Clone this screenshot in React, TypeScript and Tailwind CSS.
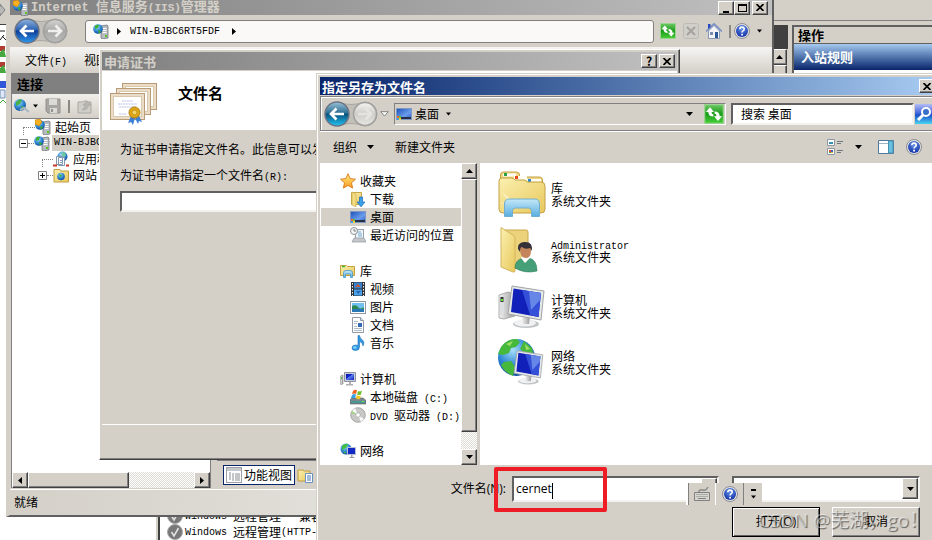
import React from "react";

type Kids = { children?: React.ReactNode; className?: string };

const raised =
  "border border-t-white border-l-white border-r-[#404040] border-b-[#404040] bg-[#d4d0c8] shadow-[inset_-1px_-1px_0_#808080]";
const sunken =
  "border-2 border-t-[#606060] border-l-[#606060] border-r-[#f4f2ee] border-b-[#f4f2ee]";
const dither =
  "bg-[#f2f0ec] bg-[conic-gradient(#dedbd4_25%,#fff_0_50%,#dedbd4_0_75%,#fff_0)] bg-[length:2px_2px]";

// latin glyphs are half the width of the chinese ones
const En = ({ children, className = "text-[10px]" }: Kids) => (
  <span className={`font-['Liberation_Mono',monospace] whitespace-pre ${className}`}>{children}</span>
);

const Defs = () => (
  <svg className="absolute h-0 w-0" aria-hidden="true">
    <defs>
      <linearGradient id="navBlue" x1="0" y1="0" x2="0" y2="1">
        <stop offset="0" stopColor="#8fb4dc" />
        <stop offset=".45" stopColor="#2d63b4" />
        <stop offset=".5" stopColor="#0d3c96" />
        <stop offset="1" stopColor="#2f9af0" />
      </linearGradient>
      <linearGradient id="navTeal" x1="0" y1="0" x2="0" y2="1">
        <stop offset="0" stopColor="#9cc0d6" />
        <stop offset=".45" stopColor="#2f7196" />
        <stop offset=".5" stopColor="#08517c" />
        <stop offset="1" stopColor="#22c4f4" />
      </linearGradient>
      <linearGradient id="searchBlue" x1="0" y1="0" x2="0" y2="1">
        <stop offset="0" stopColor="#b4bcf4" />
        <stop offset=".45" stopColor="#4468dc" />
        <stop offset=".55" stopColor="#1c50c8" />
        <stop offset="1" stopColor="#48d4f4" />
      </linearGradient>
      <linearGradient id="navGray" x1="0" y1="0" x2="0" y2="1">
        <stop offset="0" stopColor="#d4d4d2" />
        <stop offset=".5" stopColor="#a8a8a6" />
        <stop offset="1" stopColor="#bcbcba" />
      </linearGradient>
      <linearGradient id="navLight" x1="0" y1="0" x2="0" y2="1">
        <stop offset="0" stopColor="#f4f4f2" />
        <stop offset=".5" stopColor="#cfcdc8" />
        <stop offset="1" stopColor="#e8e6e2" />
      </linearGradient>
      <linearGradient id="folder" x1="0" y1="0" x2="1" y2="1">
        <stop offset="0" stopColor="#fbf0b0" />
        <stop offset="1" stopColor="#e8c85c" />
      </linearGradient>
      <linearGradient id="screen" x1="0" y1="0" x2="1" y2="1">
        <stop offset="0" stopColor="#0a16a0" />
        <stop offset=".4" stopColor="#1226d0" />
        <stop offset=".45" stopColor="#5a80f0" />
        <stop offset="1" stopColor="#1020b8" />
      </linearGradient>
      <linearGradient id="desk" x1="0" y1="0" x2="1" y2="1">
        <stop offset="0" stopColor="#1a50b8" />
        <stop offset=".6" stopColor="#6a9cec" />
        <stop offset="1" stopColor="#2858c0" />
      </linearGradient>
      <linearGradient id="glass" x1="0" y1="0" x2="0" y2="1">
        <stop offset="0" stopColor="#c4e8f8" />
        <stop offset="1" stopColor="#58aee0" />
      </linearGradient>
      <linearGradient id="green" x1="0" y1="0" x2="0" y2="1">
        <stop offset="0" stopColor="#6cc864" />
        <stop offset=".5" stopColor="#1c9c1c" />
        <stop offset="1" stopColor="#48d038" />
      </linearGradient>
      <linearGradient id="metal" x1="0" y1="0" x2="1" y2="0">
        <stop offset="0" stopColor="#f2f2f2" />
        <stop offset="1" stopColor="#9a9a9a" />
      </linearGradient>
      <radialGradient id="globe" cx=".4" cy=".3" r=".8">
        <stop offset="0" stopColor="#a8e0fc" />
        <stop offset=".5" stopColor="#3088d4" />
        <stop offset="1" stopColor="#0a3c94" />
      </radialGradient>
      <radialGradient id="help" cx=".5" cy=".3" r=".7">
        <stop offset="0" stopColor="#6a94ec" />
        <stop offset="1" stopColor="#1030a4" />
      </radialGradient>
      <linearGradient id="star" x1="0" y1="0" x2="0" y2="1">
        <stop offset="0" stopColor="#fff080" />
        <stop offset="1" stopColor="#f89820" />
      </linearGradient>
    </defs>
  </svg>
);

const Svg = ({ children, className = "size-4", box = "0 0 16 16" }: Kids & { box?: string }) => (
  <svg viewBox={box} className={`shrink-0 ${className}`} aria-hidden="true">{children}</svg>
);

const Down = ({ className = "w-[7px]" }: Kids) => (
  <Svg box="0 0 7 4" className={`h-1 ${className}`}><path d="M0 0h7L3.500 4z" /></Svg>
);
const Up = () => <Svg box="0 0 7 4" className="h-1 w-[7px]"><path d="M0 4h7L3.500 0z" /></Svg>;
const RightTri = () => <Svg box="0 0 4 7" className="h-[7px] w-1"><path d="M0 0v7l4-3.500z" /></Svg>;
const LeftTri = () => <Svg box="0 0 4 7" className="h-[7px] w-1"><path d="M4 0v7L0 3.500z" /></Svg>;
const Cross = () => (
  <Svg box="0 0 8 7" className="h-[7px] w-2"><path d="M.5 0l7 7M7.500 0l-7 7" stroke="#000" strokeWidth="1.700" /></Svg>
);

const NavPair = ({ teal = false }: { teal?: boolean }) => (
  <Svg box="0 0 56 28" className="h-7 w-14">
    <path d="M14 2Q28 7 42 2a12 12 0 010 24Q28 21 14 26z" fill="#c2bfb9" stroke="#aaa7a1" />
    <circle cx="14" cy="14" r="12" fill={teal ? "url(#navTeal)" : "url(#navBlue)"} stroke="#6c7484" strokeWidth="1.500" />
    <circle cx="42" cy="14" r="11.500" fill={teal ? "url(#navLight)" : "url(#navGray)"} stroke="#a0a09e" strokeWidth="1.500" />
    <path d="M21 14H9M13.500 8.500L8 14l5.500 5.500" fill="none" stroke="#fff" strokeWidth="2.700" />
    <path d="M35 14h12M42.500 8.500L48 14l-5.500 5.500" fill="none" stroke={teal ? "#e6e4e0" : "#f0efee"} strokeWidth="2.700" />
  </Svg>
);

const HelpIcon = () => (
  <Svg>
    <circle cx="8" cy="8" r="7.500" fill="#e4e4e4" stroke="#8c8c94" />
    <circle cx="8" cy="8" r="6" fill="url(#help)" />
    <path d="M5.800 6.300q0-2.200 2.200-2.200t2.200 1.900q0 1.200-1.200 1.900-.9.500-.9 1.600" fill="none" stroke="#fff" strokeWidth="1.600" />
    <rect x="7.200" y="10.800" width="1.800" height="1.700" fill="#fff" />
  </Svg>
);

const Refresh = ({ className = "size-4" }: Kids) => (
  <Svg className={className}>
    <rect x=".5" y=".5" width="15" height="15" fill="url(#green)" stroke="#9ad490" />
    <path d="M4.800 2.500L1.500 6.300h2q0 3.700 4 3.700V8.200q-1.500 0-1.500-1.900h2z" fill="#fff" />
    <path d="M11.200 13.500l3.300-3.800h-2q0-3.700-4-3.700v1.800q1.500 0 1.500 1.900H8z" fill="#fff" />
  </Svg>
);

const ServerIcon = ({ badge = false }: { badge?: boolean }) => (
  <Svg>
    <path d="M8 3l6-1 1 1v12l-6 1-1-1z" fill="#b8bcc0" stroke="#62686e" strokeWidth=".7" />
    <path d="M9.500 5.500h4M9.500 7.500h4M9.500 9.500h4" stroke="#fff" />
    <rect x="12" y="12" width="2" height="2" fill="#58c820" />
    <circle cx="5" cy="6" r="4.800" fill="url(#globe)" />
    <path d="M2 3q2-2 4-1L5 5 2 6zM5 7l3 1-2 3z" fill="#3cb030" />
    {badge && <path d="M0 1l5-1 2 3-3 4-4-2z" fill="#f6b020" stroke="#c87808" strokeWidth=".6" />}
  </Svg>
);

const DesktopIcon = () => (
  <Svg>
    <rect x=".5" y="2.500" width="15" height="11" fill="url(#desk)" stroke="#8298c4" />
    <rect x="1" y="11" width="14" height="2" fill="#283048" />
    <path d="M1 10h2v2H1z" fill="#f06830" /><path d="M3 10h2v2H3z" fill="#60c040" />
    <path d="M1 12h2v2H1z" fill="#40a0f0" /><path d="M3 12h2v2H3z" fill="#f8d030" />
  </Svg>
);

const StarIcon = () => (
  <Svg><path d="M8 .7l2.200 4.900 5.300.6-4 3.600 1.100 5.300L8 12.400l-4.600 2.700 1.100-5.300-4-3.600 5.300-.6z" fill="url(#star)" stroke="#d8781c" strokeWidth=".9" /></Svg>
);
const DownloadIcon = () => (
  <Svg>
    <path d="M1.500 1.500h10v12h-10z" fill="url(#folder)" stroke="#c8a848" />
    <path d="M2 1l4 2v13l-4-2z" fill="#f4dc84" stroke="#c8a848" strokeWidth=".6" />
    <path d="M9.500 6h3v5h2.500l-4 4.800L7 11h2.500z" fill="#38a0e8" stroke="#1868b8" strokeWidth=".7" />
  </Svg>
);
const RecentIcon = () => (
  <Svg>
    <rect x="5.500" y="2.500" width="8" height="9" fill="#f0f4f8" stroke="#98a0a8" />
    <path d="M7 5h4M8 7h4M8 9h4" stroke="#70a8d0" />
    <path d="M4 11h10l2 4H2z" fill="#c4c8cc" stroke="#94989c" strokeWidth=".7" />
    <circle cx="4" cy="4" r="3.500" fill="#f4f4f4" stroke="#909498" />
    <path d="M4 2v2h2" fill="none" stroke="#606468" strokeWidth=".8" />
  </Svg>
);
const LibraryIcon = () => (
  <Svg>
    <path d="M.5 2.500h6l1 1h7v9h-14z" fill="url(#folder)" stroke="#c8a040" />
    <path d="M2 3.500h3" stroke="#38b838" strokeWidth="1.500" />
    <path d="M3.500 14.500V10q0-2.500 2.500-2.500h4q2.500 0 2.500 2.500v4.500h-2V11h-5v3.500z" fill="url(#glass)" stroke="#4898c8" strokeWidth=".8" />
  </Svg>
);
const VideoIcon = () => (
  <Svg>
    <rect x="1" y="1" width="14" height="14" fill="#303438" />
    <rect x="4" y="1.500" width="8" height="6" fill="#3880d0" /><rect x="4" y="8.500" width="8" height="6" fill="#48a0e8" />
    <path d="M5 6l3-3 3 3z" fill="#c05838" /><path d="M6 10h5l-3 3z" fill="#2c64b4" />
    <path d="M2.500 2v13M13.500 2v13" stroke="#f4f4f4" strokeDasharray="1.500 1.500" />
  </Svg>
);
const PictureIcon = () => (
  <Svg>
    <rect x=".5" y="2.500" width="15" height="12" fill="#fff" stroke="#8c98a4" />
    <rect x="2" y="4" width="12" height="9" fill="#70c0f0" />
    <path d="M2 7q4-2 6 1t6 0v2H2z" fill="#2c8850" /><path d="M2 10h12v3H2z" fill="#2878b8" />
  </Svg>
);
const DocIcon = () => (
  <Svg>
    <path d="M2.500.5h8l3 3v12h-11z" fill="#fff" stroke="#909aa4" />
    <path d="M10.500.5v3h3" fill="#dce4ec" stroke="#909aa4" />
    <path d="M4 4.500h4M4 6.500h3M4 9.500h3M4 11.500h8M4 13.500h8" stroke="#9aacbc" strokeWidth=".8" />
    <rect x="8" y="6" width="4" height="4" fill="#3468b8" />
  </Svg>
);
const MusicIcon = () => (
  <Svg>
    <path d="M8 .5h1.500q0 2.500 3 4.500 2.500 2.500.5 6Q13 7.500 9.500 6.500V12q0 3.500-4 3.500Q2 15.500 2 13q0-2.800 3.500-3 1.500 0 2.500.5z" fill="#3098e0" stroke="#1c70b8" strokeWidth=".6" />
    <ellipse cx="4.800" cy="12.500" rx="1.800" ry="1.300" fill="#80d0f8" />
  </Svg>
);
const ComputerIcon = () => (
  <Svg>
    <path d="M.5 5l2.500-1v9l-2.500.5z" fill="url(#metal)" stroke="#888" strokeWidth=".6" /><path d="M1 6h1v2H1z" fill="#40d030" />
    <path d="M4.500 1.500h11v9h-11z" fill="#c8ccd8" stroke="#8c90a0" />
    <rect x="6" y="3" width="8" height="6" fill="url(#screen)" />
    <path d="M9 11h2v2h2v1.500H6V13h3z" fill="#b0b0b4" />
  </Svg>
);
const DiskIcon = () => (
  <Svg>
    <path d="M2 9h11l3 2.500v3.500H0v-4z" fill="#7c868c" stroke="#50585c" strokeWidth=".6" />
    <path d="M1 12h14v2H1z" fill="#489894" /><path d="M12 12h2v1h-2z" fill="#60f040" />
    <path d="M3 2q2-2 4-.8L6 5Q4 4 2 5z" fill="#f06020" /><path d="M8 2q2 1 4-.5L11 5.500q-2 1-4 0z" fill="#70c030" />
    <path d="M2 6q2-1.500 4-.5L5 9H1z" fill="#38a0e8" /><path d="M6.700 6q2 1.500 4 .5L10 10q-2 .5-4-.5z" fill="#f8c820" />
  </Svg>
);
const DvdIcon = () => (
  <Svg>
    <circle cx="8" cy="8" r="7.300" fill="#c8c8c6" stroke="#989898" strokeWidth=".8" />
    <path d="M8 8L2 4l3-3zM8 8l6 4-3 3z" fill="#f8f8f8" /><path d="M8 8L1 6l1-2z" fill="#80e040" opacity=".6" />
    <circle cx="8" cy="8" r="2.300" fill="#fff" stroke="#a8a8a8" strokeWidth=".8" />
  </Svg>
);
const NetworkIcon = () => (
  <Svg>
    <circle cx="6" cy="6" r="5.500" fill="url(#globe)" />
    <path d="M2 3q3-3 6-2L6 5 2 7zM3 8l3 1-1 2z" fill="#40c040" />
    <path d="M7.500 4.500h8v7h-8z" fill="#1428c4" stroke="#b8c0d8" /><path d="M11 12h1.500v2h2V15h-5v-1H11z" fill="#98a0a8" />
  </Svg>
);

const BigLibrary = () => (
  <Svg box="0 0 48 48" className="size-12">
    <path d="M2.500 9V5q0-3 3-3h13q3 0 3 3v2h20q3 0 3 3v30h-42z" fill="#eed684" stroke="#c4a044" />
    <path d="M5 3.500h13v3H5zM16 6h13v4H16zM29 9h14v4H29z" fill="#fffef4" />
    <rect x="6" y="3" width="3" height="3" fill="#28a048" /><rect x="17" y="6" width="3" height="3" fill="#e84818" /><rect x="30" y="9" width="3" height="3" fill="#2888d8" />
    <path d="M1 11q0-3 3-3h9q3 0 4 2h9q2 0 3 2h14q4 0 4 4v23q0 4-4 4H5q-4 0-4-4z" fill="url(#folder)" stroke="#c4a044" />
    <path d="M11 28L4 22l6 9-8 3 9-1 3 8-1-9 7-5-8 4z" fill="#fffbe0" opacity=".7" />
    <path d="M6.500 46.500V34q0-5 5-5h25q5 0 5 5v12.500h-8V41q0-3-3-3h-13q-3 0-3 3v5.500z" fill="url(#glass)" stroke="#70aed0" />
  </Svg>
);
const BigUser = () => (
  <Svg box="0 0 48 48" className="size-12">
    <path d="M6 4h22q2 0 2 2v34l-14 3z" fill="#ecd27a" stroke="#c9a84e" />
    <path d="M3 1.500L15 9q2 1 2 3v32q0 3-2 2L3 41z" fill="url(#folder)" stroke="#d4b65c" />
    <path d="M17 42q0-8 8-10h6q8 2 8 13-12 3-22-3z" fill="#46a077" stroke="#2c7858" strokeWidth=".6" />
    <path d="M23 32l4 5 5-5-1-3h-6z" fill="#fff" />
    <path d="M22 23q0-5 6-5 5 0 5 6 0 8-5 8-6 0-6-9z" fill="#c4845c" />
    <path d="M20 23q-1-6 6-7 9-1 8 9l-2-3q-5 2-8-1-2 0-2 5z" fill="#343238" />
  </Svg>
);
const Monitor = () => (
  <>
    <ellipse cx="28" cy="39" rx="13" ry="4" fill="#c0c4c6" /><ellipse cx="27" cy="38" rx="11" ry="3.500" fill="#f0f1f2" />
    <path d="M24 31l8 1-1 7h-7z" fill="url(#metal)" />
    <path d="M14 1l32 5-3 29-33-6z" fill="#e6e8e8" stroke="#a0a4a4" />
    <path d="M15.500 3.500L43 8l-2.500 24L13 27z" fill="#1020b8" />
    <path d="M24 5l19 3-2.500 24-8.500-2z" fill="#3450d8" /><path d="M31 6l12 2-1 7-9 10z" fill="#7c9cf0" opacity=".7" />
  </>
);
const BigComputer = () => (
  <Svg box="0 0 48 48" className="size-12">
    <g transform="translate(0 3)">
      <path d="M1 10l9-3 7 2v22L6 34l-5-1z" fill="url(#metal)" stroke="#a0a0a0" strokeWidth=".8" />
      <path d="M2 12h4v18H2z" fill="#dcdedf" /><path d="M2.500 12h3v5h-3z" fill="#303438" /><path d="M3 14h2v2H3z" fill="#70e830" />
      <Monitor />
    </g>
  </Svg>
);
const BigNetwork = () => (
  <Svg box="0 0 48 48" className="size-12">
    <circle cx="18.500" cy="19.500" r="18.500" fill="url(#globe)" />
    <path d="M3 9q7-9 16-8l3 3-4 5-5 1-2 5-6 2-5-1zM26 3l8 7 2 9-6 2-3-6-5-4zM6 24l7-1 4 6-2 9q-9-4-12-11z" fill="#46b83c" />
    <path d="M8 6l7-3-3 5zM27 6l5 5-4 1z" fill="#b8e870" opacity=".8" />
    <g transform="translate(8 12) scale(.8)"><Monitor /></g>
  </Svg>
);

const CertIcon = () => (
  <Svg box="0 0 48 42" className="h-[42px] w-12">
    {[[12, 0], [6, 5], [0, 10]].map(([x, y]) => (
      <g key={x} transform={`translate(${x} ${y})`}>
        <rect x=".5" y=".5" width="34" height="26" fill="#eadcc6" stroke="#b89c78" />
        <rect x="3.500" y="3.500" width="28" height="20" fill="#fff" stroke="#d8c8ac" />
      </g>
    ))}
    <path d="M12 18h11M8 21h19M9 24h17M9 31h8" stroke="#a8b4e0" strokeDasharray="2 .6" strokeWidth=".8" />
    <path d="M21 33l-3 7 3-1 2 3 2-7 3 6 1-3 3 1-4-8z" fill="#3c80d8" />
    <circle cx="24.500" cy="29.500" r="5.500" fill="#e0a818" stroke="#b07c08" /><circle cx="24.500" cy="29.500" r="2.500" fill="#f4d468" stroke="#b88810" strokeWidth=".8" />
  </Svg>
);

const HomeIcon = () => (
  <Svg>
    <path d="M2.500 8v7.500h11V8L8 2.500z" fill="#f4f4f8" stroke="#8898b8" />
    <path d="M0 8.500L8 .8l8 7.700" fill="none" stroke="#7890c4" strokeWidth="1.600" /><path d="M2 1h2.500v3L2 6z" fill="#2848c0" />
    <rect x="9" y="9" width="3" height="6" fill="#2c5898" /><rect x="4" y="9" width="3" height="3" fill="#788cac" />
  </Svg>
);
const AppPoolIcon = () => (
  <Svg>
    <circle cx="9.500" cy="5.500" r="5" fill="url(#globe)" /><path d="M8 2l4-1 1 4-3 1z" fill="#70c8a0" />
    <path d="M3.500 5.500h6v8h-6zM5.500 6.500h6v8h-6z" fill="#fff" stroke="#8098b0" />
    <path d="M7 9.500h3M7 11.500h3" stroke="#88a0c0" /><path d="M0 14.500h4M13 14.500h3" stroke="#c83828" strokeWidth="2" />
  </Svg>
);
const SiteIcon = () => (
  <Svg>
    <path d="M1 2.500h6l1 1.500h7.500v11H1z" fill="url(#folder)" stroke="#c49c40" />
    <circle cx="8" cy="9.500" r="3.800" fill="url(#globe)" /><path d="M6 7l3 1-2 3z" fill="#38b040" />
  </Svg>
);

const TreeBox = ({ open = false }: { open?: boolean }) => (
  <Svg box="0 0 9 9" className="size-[9px]">
    <path d="M.5.5h8v8h-8z" fill="#fff" stroke="#808080" />
    <path d={open ? "M2 4.500h5" : "M2 4.500h5M4.500 2v5"} stroke="#000" />
  </Svg>
);
const Dots = ({ className = "" }: Kids) => <span className={`border-t border-dotted border-[#808080] ${className}`} />;

const CaptionButton = ({ children, label }: Kids & { label: string }) => (
  <button aria-label={label} className={`flex h-[14px] w-4 shrink-0 items-center justify-center text-[12px] leading-none font-bold ${raised}`}>{children}</button>
);

const BackgroundWindows = () => (
  <>
    {/* sliver of the window at the far left */}
    <div className="absolute top-0 bottom-0 left-0 w-[6px] overflow-hidden bg-white">
      <div className="h-[21px] bg-[#d4d0c8] pt-[3px]">
        <Svg box="0 0 6 14" className="h-[14px] w-[6px]"><path d="M0 4V1l5 6-5 6v-3" fill="#b8b8b8" stroke="#808080" /></Svg>
      </div>
      <div className="h-1 border-b border-[#404040] bg-[#d4d0c8]" />
      <Svg box="0 0 6 80" className="h-20 w-[6px]">
        <path d="M0 6h5M4 10l-4 5M2 11l4 4" stroke="#222" fill="none" />
        <path d="M0 21h5v5H0zM0 37h5v5H0z" fill="#b03c34" /><path d="M0 27l4-3 2 8H0zM0 43l4-3 2 8H0z" fill="#48a840" />
        <path d="M0 56h6v7H0z" fill="#3058d8" /><path d="M0 65h5v8H0z" fill="#dce8f8" stroke="#7890b0" /><path d="M0 78l3-3 3 3" stroke="#40a840" fill="none" />
      </Svg>
    </div>

    {/* firewall rules on the right */}
    <div className="absolute top-0 right-0 bottom-0 left-[156px] flex flex-col border-l-2 border-[#d4d0c8] bg-[#d4d0c8]">
      <div className="mb-1 h-[21px] border-b border-[#808080]" />
      <div className="flex min-h-0 flex-1">
        <div className="flex min-w-0 flex-1 flex-col justify-end border-l-2 border-[#404040] bg-white px-[7px] text-[12px]">
          {[["   ", "兼容模式", ""], ["", "", "(HTTP-In)"]].map(([gap, tail, en], i) => (
            <div key={i} className="flex h-4 items-center whitespace-pre">
              <Svg className="mr-[2px] size-4">
                <circle cx="8" cy="8" r="7.500" fill="#787878" stroke="#a8a8a8" />
                <path d="M4.500 8l2.500 4 4.500-8" fill="none" stroke="#e0e0e0" strokeWidth="1.600" />
              </Svg>
              <En>{"Windows "}</En>远程管理<En>{gap}</En>{tail}<En>{en}</En>
            </div>
          ))}
        </div>
        <div className="w-4 bg-[#d4d0c8]">
          <div className="h-6 bg-[#404040]" />
          <button aria-label="向上滚动" className={`flex h-4 w-[15px] items-center justify-center ${raised}`}><Up /></button>
          <div className={`h-32 w-[15px] ${raised}`} />
        </div>
        <aside className="ml-1 w-[140px] border-t-2 border-l-2 border-[#606060] bg-white">
          <h2 className="h-[17px] border-b border-[#606060] bg-[#d4d0c8] pl-1 text-[13px] leading-4 font-bold">操作</h2>
          <h3 className="h-[26px] bg-linear-to-b from-[#a6caf0] to-[#0a246a] pl-[7px] text-[13px] leading-[26px] font-bold text-white">入站规则</h3>
        </aside>
      </div>
    </div>
    <div className="absolute bottom-0 left-[6px] h-8 w-[150px] bg-white" />
  </>
);

const IisWindow = () => (
  <section className="absolute top-0 left-[6px] flex h-[517px] w-[768px] flex-col border-r-2 border-b-2 border-l-4 border-r-[#606060] border-b-[#606060] border-l-[#d4d0c8] bg-[#d4d0c8] text-[12px]">
    <header className="flex h-[15px] items-center bg-linear-to-r from-[#808080] to-[#c0c0c0] pr-1 pl-[3px] text-[13px] font-bold whitespace-pre text-[#d4d0c8]">
      <ServerIcon badge />
      <h1 className="flex-1 pb-[2px] pl-[2px] leading-[13px]"><En className="text-[12px]">{"Internet "}</En>信息服务<En className="text-[11px]">(IIS)</En>管理器</h1>
      <CaptionButton label="最小化"><span className="mt-2 h-[2px] w-[6px] bg-black" /></CaptionButton>
      <CaptionButton label="最大化"><span className="h-2 w-[9px] border border-t-2 border-black" /></CaptionButton>
      <span className="w-[2px]" />
      <CaptionButton label="关闭"><Cross /></CaptionButton>
    </header>
    <div className="flex h-8 items-center pr-[10px] pl-[3px]">
      <NavPair />
      <div className="ml-4 flex h-[23px] flex-1 items-center rounded-[3px] border border-[#808080] bg-[#faf9f8] pl-[7px]">
        <ServerIcon /><span className="w-2" /><RightTri />
        <En className="pr-3 pl-[9px] text-[10px]">WIN-BJBC6RT5FDF</En><RightTri />
      </div>
      <div className="ml-[6px] flex items-center gap-[7px]">
        <button aria-label="刷新"><Refresh /></button>
        <button aria-label="停止"><Svg><rect x=".5" y=".5" width="15" height="15" rx="2" fill="#d0cec8" stroke="#bcbab4" /><path d="M4 4l8 8M12 4l-8 8" stroke="#a4a29e" strokeWidth="2" /></Svg></button>
        <button aria-label="主页"><HomeIcon /></button>
        <button aria-label="帮助" className="flex items-center gap-[3px]"><span className="h-[13px] w-[2px] bg-[#8c8984]" /><HelpIcon /></button>
        <Down className="w-[5px]" />
      </div>
    </div>
    <nav className="flex h-[26px] items-center gap-[17px] bg-linear-to-b from-[#f6f5f3] to-[#d4d0c8] pl-[15px]">
      <button>文件<En>(F)</En></button>
      <button>视图<En>(V)</En></button>
    </nav>
    <div className="flex min-h-0 flex-1 pl-[1px]">
      <aside className="flex w-[200px] flex-col border-r border-l border-[#808080]">
        <h2 className="h-[21px] bg-[#808080] pl-[5px] text-[13px] leading-[21px] font-bold">连接</h2>
        <div className="flex h-[25px] items-center gap-[7px] border-b border-[#808080] bg-linear-to-b from-[#f0eeea] to-[#d4d0c8] pl-[2px]">
          <span className="flex items-center gap-[3px]">
            <Svg><circle cx="6" cy="7" r="6" fill="url(#globe)" /><path d="M2 4q4-4 6-2L6 6 2 8zM7 8l4 1-3 3z" fill="#48b048" /><path d="M6 12l4-2 5 4" fill="none" stroke="#a8b8c0" strokeWidth="2" /></Svg>
            <Down className="w-[5px]" />
          </span>
          <Svg><path d="M1 1h14v14H3l-2-2z" fill="#a8a6a2" stroke="#94928e" /><path d="M4 1h8v6H4zM5 10h7v5H5z" fill="#dcdad6" /><path d="M6 11h2v3H6z" fill="#94928e" /></Svg>
          <span className="h-[13px] w-[2px] bg-[#8c8984]" />
          <Svg><path d="M1 4h5l1-1h3l1 1h3v11H1z" fill="#d0cec8" stroke="#aaa8a2" /><path d="M5 12q3-2 3-5H6l4-4 4 4h-2.500q0 5-6.500 5z" fill="#b8b6b0" stroke="#a4a29c" strokeWidth=".6" /></Svg>
          <span className="h-[13px] w-[2px] bg-[#8c8984]" />
        </div>
        <ul className="flex-1 bg-white">
          <li className="flex h-4 items-center pl-[11px]"><Dots className="h-2 w-3 self-end border-l" /><ServerIcon badge /><span className="pl-1">起始页</span></li>
          <li className="flex h-4 items-center pl-[7px]">
            <TreeBox open /><Dots className="w-[6px]" /><ServerIcon /><En className="ml-[2px] bg-[#d4d0c8] px-[2px] text-[10px] leading-4">WIN-BJBC6RT5FDF</En>
          </li>
          <li className="flex h-4 items-center pl-[30px]"><Dots className="h-2 w-[11px] self-end border-l" /><AppPoolIcon /><span className="pl-1">应用程序池</span></li>
          <li className="flex h-4 items-center pl-[26px]"><TreeBox /><Dots className="w-[6px]" /><SiteIcon /><span className="pl-1">网站</span></li>
        </ul>
        <div className={`flex h-4 justify-between ${dither}`}>
          <button aria-label="向左滚动" className={`flex w-4 items-center justify-center ${raised}`}><LeftTri /></button>
          <div className={`mr-auto w-[101px] ${raised}`} />
          <button aria-label="向右滚动" className={`flex w-4 items-center justify-center ${raised}`}><RightTri /></button>
        </div>
      </aside>
      <main className="ml-[6px] flex min-w-0 flex-1 flex-col">
        <div className="flex-1 border-b border-l border-[#808080] bg-white" />
        <div className="flex h-[27px] items-center gap-[2px] pl-[6px]">
          <button className="flex h-5 items-center gap-[2px] border border-[#0a246a] bg-white px-[2px]">
            <Svg><rect x=".5" y=".5" width="15" height="15" fill="#fff" stroke="#9ca0a4" /><path d="M1 1h14v3H1z" fill="#c4c8cc" /><path d="M3 6h2M3 8h2M3 10h2M3 12h2M7 6v8M9 7h5M9 9h5M9 11h5M9 13h5" stroke="#888c90" /></Svg>
            功能视图
          </button>
          <Svg><path d="M1 3h5l1 1h6v10H1z" fill="url(#folder)" stroke="#c09c40" /><path d="M8.500 6.500h7v9h-7z" fill="#fff" stroke="#6890c0" /><path d="M10 9h4M10 11h4M10 13h4" stroke="#4878b8" /></Svg>
        </div>
      </main>
    </div>
    <footer className="mt-[1px] h-[26px] border-t border-white bg-linear-to-r from-[#d4d0c8] to-[#f4f4f2] pl-1 leading-6">就绪</footer>
  </section>
);

const CertDialog = () => (
  <section className="absolute top-[49px] left-[99px] flex h-[411px] w-[581px] flex-col border border-t-white border-r-[#404040] border-b-[#404040] border-l-white bg-[#d4d0c8] p-[2px] text-[12px] shadow-[inset_-1px_-1px_0_#808080]">
    <header className="flex h-[18px] shrink-0 items-center bg-linear-to-r from-[#808080] to-[#c0c0c0] pr-[2px] pl-[2px] text-[#d4d0c8]">
      <h2 className="flex-1 text-[13px] leading-none font-bold">申请证书</h2>
      <span className="flex text-black"><CaptionButton label="帮助">?</CaptionButton><span className="w-[2px]" /><CaptionButton label="关闭"><Cross /></CaptionButton></span>
    </header>
    <div className="mt-[1px] flex h-[59px] shrink-0 bg-white pt-3 pl-2">
      <CertIcon />
      <h3 className="pl-5 text-[15px] leading-5 font-bold">文件名</h3>
    </div>
    <form className="flex flex-1 flex-col pt-[10px] pl-[18px]" onSubmit={(e) => e.preventDefault()}>
      <p className="mb-[9px] leading-[17px]">为证书申请指定文件名。此信息可以发送给证书颁发机构签名：</p>
      <label htmlFor="certFile" className="mb-[5px] leading-[17px]">为证书申请指定一个文件名<En>(R):</En></label>
      <input id="certFile" className={`h-[21px] w-[420px] bg-white px-1 ${sunken}`} />
    </form>
    <footer className="h-[33px] shrink-0 border-t border-white" />
  </section>
);

const places: { name: React.ReactNode; icon: React.ReactNode; top?: boolean; selected?: boolean; gap?: boolean }[] = [
  { name: "收藏夹", icon: <StarIcon />, top: true },
  { name: "下载", icon: <DownloadIcon /> },
  { name: "桌面", icon: <DesktopIcon />, selected: true },
  { name: "最近访问的位置", icon: <RecentIcon /> },
  { name: "库", icon: <LibraryIcon />, top: true, gap: true },
  { name: "视频", icon: <VideoIcon /> },
  { name: "图片", icon: <PictureIcon /> },
  { name: "文档", icon: <DocIcon /> },
  { name: "音乐", icon: <MusicIcon /> },
  { name: "计算机", icon: <ComputerIcon />, top: true, gap: true },
  { name: <>本地磁盘<En>{" (C:)"}</En></>, icon: <DiskIcon /> },
  { name: <><En>{"DVD "}</En>驱动器<En>{" (D:)"}</En></>, icon: <DvdIcon /> },
  { name: "网络", icon: <NetworkIcon />, top: true, gap: true },
];

const files = [
  { name: "库", icon: <BigLibrary /> },
  { name: <En>Administrator</En>, icon: <BigUser /> },
  { name: "计算机", icon: <BigComputer /> },
  { name: "网络", icon: <BigNetwork /> },
];

const SaveDialog = () => (
  <section className="absolute top-[73px] right-0 bottom-0 left-[316px] flex flex-col overflow-hidden border-t border-l border-[#d4d0c8] bg-[#d4d0c8] text-[12px]">
    <div className="flex min-h-0 flex-1 flex-col border-t border-l border-white pt-[2px] pl-[2px]">
      <header className="flex h-[18px] shrink-0 items-center overflow-hidden bg-linear-to-r from-[#0a246a] to-[#a6caf0] pl-[2px] text-white">
        <h2 className="flex-1 text-[13px] leading-none font-bold">指定另存为文件名</h2>
        <div className="w-[13px] overflow-hidden text-black"><CaptionButton label="关闭"><Cross /></CaptionButton></div>
      </header>
      <div className="mt-[1px] flex h-[35px] shrink-0 items-center border-t border-b border-l border-[#808080] pl-[2px] shadow-[inset_1px_1px_0_#fff,0_1px_0_#fff]">
        <NavPair teal />
        <Svg box="0 0 9 6" className="ml-[1px] h-[6px] w-[9px]"><path d="M.7.7h7.600L4.500 5z" fill="#fff" stroke="#808080" /></Svg>
        <div className="ml-[5px] flex h-[22px] flex-1 items-center border border-t-[#808080] border-r-white border-b-white border-l-[#808080] pl-[1px]">
          <DesktopIcon />
          <span className="px-[3px]">桌面</span>
          <Down className="ml-1 w-[5px]" />
          <Down className="mr-[11px] ml-auto w-[7px]" />
          <button aria-label="刷新" className="mr-[1px]"><Refresh className="size-5" /></button>
        </div>
        <input aria-label="搜索" defaultValue="搜索 桌面" className={`mr-[1px] ml-[5px] h-[22px] w-[183px] bg-white px-2 ${sunken}`} />
        <button aria-label="开始搜索" className="h-5 w-[17px] overflow-hidden">
          <Svg box="0 0 20 20" className="size-5"><rect width="20" height="20" fill="url(#searchBlue)" /><circle cx="11" cy="8" r="4" fill="#3870c8" stroke="#fff" strokeWidth="2" /><path d="M8 11l-5 5" stroke="#fff" strokeWidth="3" /></Svg>
        </button>
      </div>
      <div className="flex h-8 shrink-0 items-center pr-[10px] pl-[13px]">
        <button className="flex items-center gap-[10px]">组织<Down /></button>
        <button className="ml-[21px]">新建文件夹</button>
        <button aria-label="更改视图" className="ml-auto flex items-center gap-3">
          <Svg>
            <path d="M.5.5h7v6h-7zM.5 9.500h7v6h-7z" fill="#fff" stroke="#8c98a4" /><path d="M2 3h4v2H2z" fill="#3090b0" />
            <path d="M2 11h2v2H2z" fill="#e84828" /><path d="M4 11h2v2H4z" fill="#3860d8" /><path d="M2 13h2v1H2z" fill="#40b040" /><path d="M4 13h2v1H4z" fill="#f0b020" />
            <path d="M10 2.500h6M10 4.500h4M10 11.500h6M10 13.500h4" stroke="#707880" />
          </Svg>
          <Down />
        </button>
        <button aria-label="预览窗格" className="ml-4">
          <Svg><path d="M.5 1.500h15v13H.5z" fill="#fff" stroke="#50789c" /><path d="M1 4.500h10" stroke="#a0b4c8" /><path d="M10.500 2h4.500v12h-4.500z" fill="#68c0e0" stroke="#4890b0" /></Svg>
        </button>
        <button aria-label="帮助" className="ml-3"><HelpIcon /></button>
      </div>
      <div className="flex min-h-0 flex-1">
        <ul className="w-[141px] shrink-0 bg-white pt-[9px] pl-[1px] whitespace-nowrap">
          {places.map((p, i) => (
            <li key={i} className={`flex h-[18px] items-center ${p.gap ? "mt-[18px]" : ""} ${p.selected ? "bg-[#d4d0c8]" : ""} ${p.top ? "pl-[19px]" : "pl-[29px]"}`}>
              {p.icon}<span className="pl-1">{p.name}</span>
            </li>
          ))}
        </ul>
        <div className={`mr-[3px] flex w-4 shrink-0 flex-col ${dither}`}>
          <button aria-label="向上滚动" className={`flex h-4 items-center justify-center ${raised}`}><Up /></button>
          <div className={`mb-[17px] flex-1 ${raised}`} />
          <button aria-label="向下滚动" className={`flex h-4 items-center justify-center ${raised}`}><Down /></button>
        </div>
        <ul className="flex-1 bg-white pt-[3px] pl-[18px]">
          {files.map((f, i) => (
            <li key={i} className="flex h-14 items-center gap-[5px]">
              {f.icon}
              <div><p className="h-[13px] leading-[13px]">{f.name}</p><p className="h-[13px] leading-[13px]">系统文件夹</p></div>
            </li>
          ))}
        </ul>
      </div>
      <form className="flex h-[75px] shrink-0 flex-col items-end gap-[5px] pt-[11px] pr-3 font-['Open_Sans','Noto_Sans_CJK_SC',sans-serif]" onSubmit={(e) => e.preventDefault()}>
        <div className="flex items-center">
          <label htmlFor="fileName" className="pr-[6px]">文件名(N):</label>
          <div className={`flex h-[26px] w-[207px] bg-white ${sunken}`}>
            <input id="fileName" defaultValue="cernet" className="w-full min-w-0 pl-[2px] outline-none" />
            <button aria-label="历史" className={`w-4 shrink-0 ${raised}`} />
          </div>
          <div className={`relative ml-[13px] h-[26px] w-[188px] bg-white ${sunken}`}>
            <select aria-label="文件类型" className="h-full w-full appearance-none outline-none"><option></option></select>
            <span className={`pointer-events-none absolute top-0 right-0 flex h-[21px] w-4 items-center justify-center ${raised}`}><Down /></span>
          </div>
        </div>
        <div className="flex gap-3">
          <button className="h-[30px] w-[88px] border border-black bg-[#d4d0c8] shadow-[inset_1px_1px_0_#fff,inset_-1px_-1px_0_#606060]">打开(O)</button>
          <button className={`h-[30px] w-[88px] ${raised}`}>取消</button>
        </div>
      </form>
    </div>
    {/* text caret of the file name box */}
    <span className="absolute bottom-[41px] left-[235px] h-4 w-px bg-black" />
  </section>
);

const LanguageBar = () => (
  <div className="absolute bottom-[35px] left-[686px] flex h-[22px] w-[76px] items-center border-l-2 border-l-white bg-[#d4d0c8] shadow-[inset_1px_0_0_#808080]">
    <button aria-label="键盘" className="flex h-full w-[28px] items-center justify-center border-r border-white">
      <Svg><path d="M.5 6.500h15v8H.5z" fill="#d8d6d0" stroke="#808080" /><path d="M2.500 8.500h11M2.500 10.500h11" stroke="#808080" strokeDasharray="1 1" /><path d="M4 12.500h8" stroke="#808080" /><path d="M5 6q0-3 4-2 3 1 5-3" fill="none" stroke="#8c8c8c" strokeWidth="1.500" /></Svg>
    </button>
    <button aria-label="帮助" className="flex h-full w-[28px] items-center justify-center border-r border-[#808080]">
      <HelpIcon />
    </button>
    <button aria-label="选项" className="flex flex-1 flex-col items-center gap-1"><span className="h-[2px] w-[5px] bg-black" /><Down className="w-[5px]" /></button>
  </div>
);

export default function App() {
  return (
    <div className="relative h-screen min-h-[540px] w-full overflow-hidden bg-white font-['Noto_Sans_CJK_SC',sans-serif] text-black">
      <Defs />
      <BackgroundWindows />
      <IisWindow />
      <CertDialog />
      <SaveDialog />
      <LanguageBar />
      <div className="pointer-events-none absolute bottom-[28px] left-[494px] h-[45px] w-[113px] rounded-[2px] border-4 border-[#ee1c25]" />
      <p className="pointer-events-none absolute right-[4px] bottom-[6px] font-['Open_Sans','Noto_Sans_CJK_SC',sans-serif] text-[19px] leading-7 whitespace-nowrap text-white/50 [text-shadow:1px_1px_1px_#0008]">CSDN @芜湖，go！</p>
    </div>
  );
}
